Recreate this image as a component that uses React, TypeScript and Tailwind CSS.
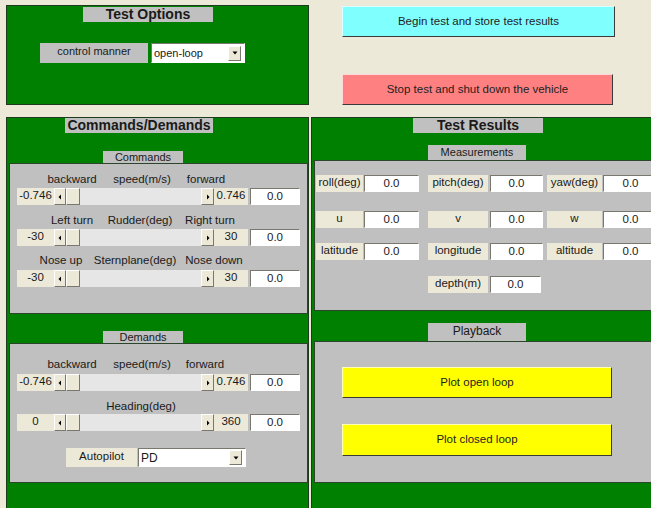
import type { ReactNode } from "react";

const raised =
  "border border-t-white border-l-white border-b-[#7a786e] border-r-[#7a786e]";
const sunken =
  "border border-t-[#7a786e] border-l-[#7a786e] border-b-white border-r-white";
const pushBtn =
  "border border-t-white/70 border-l-white/70 border-b-[#3a3a3a] border-r-[#3a3a3a] text-center text-[#222]";

function ArrowBtn({
  dir,
  className = "",
}: {
  dir: "left" | "right" | "down";
  className?: string;
}) {
  return (
    <span
      className={`flex items-center justify-center bg-[#ece9d8] ${raised} ${className}`}
    >
      <svg width="6" height="6" viewBox="0 0 6 6">
        {dir === "left" && <path d="M4 0.5v5L1.5 3z" fill="#000" />}
        {dir === "right" && <path d="M2 0.5v5L4.5 3z" fill="#000" />}
        {dir === "down" && <path d="M0.5 1.5h5L3 4.5z" fill="#000" />}
      </svg>
    </span>
  );
}

function Edit({ className = "" }: { className?: string }) {
  return (
    <span
      className={`bg-white text-center leading-[15px] ${sunken} ${className}`}
    >
      0.0
    </span>
  );
}

function Select({ value, className = "" }: { value: string; className?: string }) {
  return (
    <div className={`flex items-center bg-white ${sunken} ${className}`}>
      <span className="flex-1 pl-[2px]">{value}</span>
      <ArrowBtn dir="down" className="mr-[3px] h-[15px] w-[13px]" />
    </div>
  );
}

// caption centred on a zero-width anchor so that labels line up above the slider
function Cap({ text, className }: { text: string; className: string }) {
  return (
    <span className={`flex w-0 justify-center whitespace-nowrap ${className}`}>
      {text}
    </span>
  );
}

function Slider({ min, max, className = "" }: { min: string; max: string; className?: string }) {
  return (
    <div className={`ml-[7px] flex h-[17px] ${className}`}>
      <span className="w-[37px] bg-[#ece9d8] text-center leading-[15px]">{min}</span>
      <div className="flex w-[160px]">
        <ArrowBtn dir="left" className="w-[12px]" />
        <span className={`w-[14px] bg-[#ece9d8] ${raised}`} />
        <span className="flex-1 bg-[#e6e6e6]" />
        <ArrowBtn dir="right" className="w-[13px]" />
      </div>
      <span className="w-[34px] bg-[#ece9d8] text-center leading-[15px]">{max}</span>
      <Edit className="ml-[2px] w-[50px]" />
    </div>
  );
}

function SubPanel({
  title,
  tabClass,
  boxClass,
  children,
  className = "",
}: {
  title: string;
  tabClass: string;
  boxClass: string;
  children: ReactNode;
  className?: string;
}) {
  return (
    <div className={`flex flex-col ${className}`}>
      <span className={`bg-[#c0c0c0] text-center ${tabClass}`}>{title}</span>
      <div className={`flex flex-col border border-[#2c452c] bg-[#c0c0c0] ${boxClass}`}>
        {children}
      </div>
    </div>
  );
}

function Field({
  label,
  labelClass,
  editClass,
}: {
  label: string;
  labelClass: string;
  editClass: string;
}) {
  return (
    <>
      <span className={`bg-[#ece9d8] text-center leading-[15px] ${labelClass}`}>{label}</span>
      <Edit className={editClass} />
    </>
  );
}

export default function App() {
  return (
    <div className="h-[508px] w-[651px] overflow-hidden bg-[#ece9d8] font-['Liberation_Sans',Arial,sans-serif] text-[11.5px] text-[#1a1a1a]">
      <div className="flex h-[117px]">
        <section className="ml-[6px] mt-[5px] flex h-[100px] w-[303px] flex-col border border-[#1d3b1d] bg-[#008000]">
          <h2 className="ml-[76px] mt-[1px] h-[15px] w-[130px] bg-[#c0c0c0] text-center text-[14px] font-bold leading-[15px]">
            Test Options
          </h2>
          <div className="ml-[33px] mt-[21px] flex h-[20px]">
            <span className="w-[108px] bg-[#c0c0c0] text-center text-[11px] leading-[17px]">
              control manner
            </span>
            <Select value="open-loop" className="ml-[3px] w-[94px] text-[11px]" />
          </div>
        </section>
        <div className="ml-[33px] flex flex-col">
          <button className={`mt-[6px] h-[31px] w-[273px] bg-[#80ffff] ${pushBtn}`}>
            Begin test and store test results
          </button>
          <button className={`mt-[37px] h-[31px] w-[271px] bg-[#ff8080] ${pushBtn}`}>
            Stop test and shut down the vehicle
          </button>
        </div>
      </div>

      <div className="flex">
        {/* Commands / Demands */}
        <section className="ml-[6px] flex h-[400px] w-[303px] flex-col border border-[#1d3b1d] bg-[#008000]">
          <h2 className="ml-[58px] h-[15px] w-[148px] bg-[#c0c0c0] text-center text-[14px] font-bold leading-[15px]">
            Commands/Demands
          </h2>
          <SubPanel
            title="Commands"
            className="ml-[2px] mt-[18px]"
            tabClass="ml-[94px] h-[12px] w-[80px] text-[11px] leading-[12px]"
            boxClass="h-[151px] w-[299px]"
          >
            <div className="mt-[9px] flex h-[13px] leading-[13px]">
              <Cap text="backward" className="ml-[62px]" />
              <Cap text="speed(m/s)" className="ml-[70px]" />
              <Cap text="forward" className="ml-[64px]" />
            </div>
            <Slider min="-0.746" max="0.746" className="mt-[2px]" />
            <div className="mt-[9px] flex h-[13px] leading-[13px]">
              <Cap text="Left turn" className="ml-[62px]" />
              <Cap text="Rudder(deg)" className="ml-[68px]" />
              <Cap text="Right turn" className="ml-[70px]" />
            </div>
            <Slider min="-30" max="30" className="mt-[2px]" />
            <div className="mt-[8px] flex h-[13px] leading-[13px]">
              <Cap text="Nose up" className="ml-[51px]" />
              <Cap text="Sternplane(deg)" className="ml-[74px]" />
              <Cap text="Nose down" className="ml-[79px]" />
            </div>
            <Slider min="-30" max="30" className="mt-[3px]" />
          </SubPanel>

          <SubPanel
            title="Demands"
            className="ml-[2px] mt-[17px]"
            tabClass="ml-[94px] h-[12px] w-[80px] text-[11px] leading-[12px]"
            boxClass="h-[140px] w-[299px]"
          >
            <div className="mt-[14px] flex h-[13px] leading-[13px]">
              <Cap text="backward" className="ml-[62px]" />
              <Cap text="speed(m/s)" className="ml-[70px]" />
              <Cap text="forward" className="ml-[63px]" />
            </div>
            <Slider min="-0.746" max="0.746" className="mt-[3px]" />
            <div className="mt-[9px] flex h-[13px] leading-[13px]">
              <Cap text="Heading(deg)" className="ml-[131px]" />
            </div>
            <Slider min="0" max="360" className="mt-[1px]" />
            <div className="ml-[56px] mt-[17px] flex h-[19px]">
              <span className="w-[71px] bg-[#ece9d8] text-center leading-[16px]">Autopilot</span>
              <Select value="PD" className="ml-[1px] w-[108px] text-[12px]" />
            </div>
          </SubPanel>
        </section>

        {/* Test Results */}
        <section className="ml-[2px] flex h-[400px] w-[345px] flex-col border border-[#1d3b1d] bg-[#008000]">
          <h2 className="ml-[101px] h-[15px] w-[130px] bg-[#c0c0c0] text-center text-[14px] font-bold leading-[15px]">
            Test Results
          </h2>
          <SubPanel
            title="Measurements"
            className="ml-[2px] mt-[12px]"
            tabClass="ml-[114px] h-[15px] w-[98px] text-[11px] leading-[15px]"
            boxClass="h-[151px] w-[345px]"
          >
            <div className="mt-[14px] flex h-[17px]">
              <Field label="roll(deg)" labelClass="ml-[1px] w-[47px]" editClass="ml-[1px] w-[55px]" />
              <Field label="pitch(deg)" labelClass="ml-[9px] w-[60px]" editClass="ml-[2px] w-[53px]" />
              <Field label="yaw(deg)" labelClass="ml-[4px] w-[55px]" editClass="ml-[1px] w-[55px]" />
            </div>
            <div className="mt-[19px] flex h-[17px]">
              <Field label="u" labelClass="ml-[1px] w-[47px]" editClass="ml-[1px] w-[55px]" />
              <Field label="v" labelClass="ml-[9px] w-[60px]" editClass="ml-[2px] w-[53px]" />
              <Field label="w" labelClass="ml-[4px] w-[55px]" editClass="ml-[1px] w-[55px]" />
            </div>
            <div className="mt-[15px] flex h-[17px]">
              <Field label="latitude" labelClass="ml-[1px] w-[47px]" editClass="ml-[1px] w-[55px]" />
              <Field label="longitude" labelClass="ml-[9px] w-[60px]" editClass="ml-[2px] w-[53px]" />
              <Field label="altitude" labelClass="ml-[4px] w-[55px]" editClass="ml-[1px] w-[55px]" />
            </div>
            <div className="mt-[16px] flex h-[17px]">
              <Field label="depth(m)" labelClass="ml-[113px] w-[60px]" editClass="ml-[2px] w-[51px]" />
            </div>
          </SubPanel>

          <SubPanel
            title="Playback"
            className="ml-[2px] mt-[12px]"
            tabClass="ml-[114px] h-[18px] w-[98px] text-[12px] leading-[17px]"
            boxClass="h-[142px] w-[345px]"
          >
            <button className={`ml-[27px] mt-[25px] h-[31px] w-[270px] bg-[#ffff00] ${pushBtn}`}>
              Plot open loop
            </button>
            <button className={`ml-[27px] mt-[26px] h-[32px] w-[270px] bg-[#ffff00] ${pushBtn}`}>
              Plot closed loop
            </button>
          </SubPanel>
        </section>
      </div>
    </div>
  );
}
